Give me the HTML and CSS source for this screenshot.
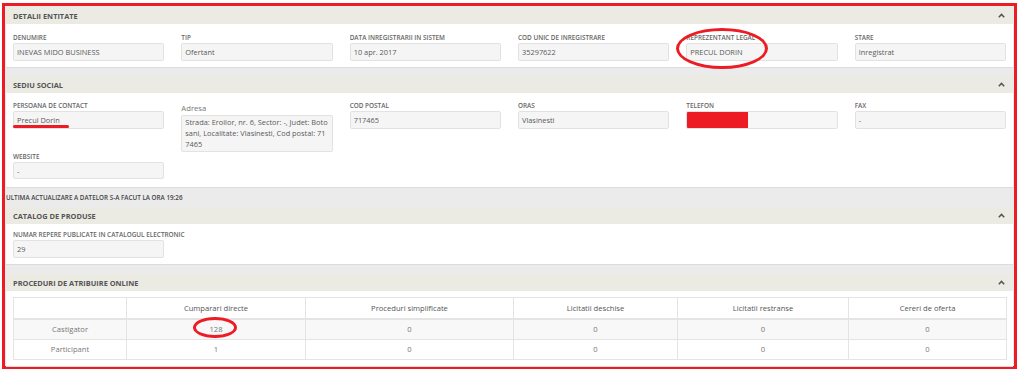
FILE: index.html
```html
<!DOCTYPE html>
<html lang="ro">
<head>
<meta charset="utf-8">
<title>Detalii entitate</title>
<link rel="stylesheet" href="styles.css">
</head>
<body>
<div class="frame">
  <section class="panel">
    <header class="panel-head"><span>Detalii entitate</span><svg class="caret" width="7" height="5" viewBox="0 0 7 5"><path d="M0.8 4.2 L3.5 1.4 L6.2 4.2" fill="none" stroke="#555" stroke-width="1.5"/></svg></header>
    <div class="panel-body grid">
      <div class="field"><label>Denumire</label><div class="input">INEVAS MIDO BUSINESS</div></div>
      <div class="field"><label>Tip</label><div class="input">Ofertant</div></div>
      <div class="field"><label>Data inregistrarii in sistem</label><div class="input">10 apr. 2017</div></div>
      <div class="field"><label>Cod unic de inregistrare</label><div class="input">35297622</div></div>
      <div class="field"><label>Reprezentant legal</label><div class="input">PRECUL DORIN</div></div>
      <div class="field"><label>Stare</label><div class="input">Inregistrat</div></div>
    </div>
  </section>

  <section class="panel gap-top">
    <header class="panel-head"><span>Sediu social</span><svg class="caret" width="7" height="5" viewBox="0 0 7 5"><path d="M0.8 4.2 L3.5 1.4 L6.2 4.2" fill="none" stroke="#555" stroke-width="1.5"/></svg></header>
    <div class="panel-body grid">
      <div class="field"><label>Persoana de contact</label><div class="input">Precul Dorin</div></div>
      <div class="field"><label class="plain">Adresa</label><div class="input area">Strada: Eroilor, nr. 6, Sector: -, Judet: Boto sani, Localitate: Vlasinesti, Cod postal: 71 7465</div></div>
      <div class="field"><label>Cod postal</label><div class="input">717465</div></div>
      <div class="field"><label>Oras</label><div class="input">Vlasinesti</div></div>
      <div class="field"><label>Telefon</label><div class="input redacted"><span class="mask"></span></div></div>
      <div class="field"><label>Fax</label><div class="input">-</div></div>
      <div class="field"><label>Website</label><div class="input">-</div></div>
    </div>
  </section>

  <p class="note">Ultima actualizare a datelor s-a facut la ora 19:26</p>

  <section class="panel">
    <header class="panel-head"><span>Catalog de produse</span><svg class="caret" width="7" height="5" viewBox="0 0 7 5"><path d="M0.8 4.2 L3.5 1.4 L6.2 4.2" fill="none" stroke="#555" stroke-width="1.5"/></svg></header>
    <div class="panel-body grid tight">
      <div class="field wide"><label>Numar repere publicate in catalogul electronic</label><div class="input">29</div></div>
    </div>
  </section>

  <section class="panel gap-top2">
    <header class="panel-head"><span>Proceduri de atribuire online</span><svg class="caret" width="7" height="5" viewBox="0 0 7 5"><path d="M0.8 4.2 L3.5 1.4 L6.2 4.2" fill="none" stroke="#555" stroke-width="1.5"/></svg></header>
    <div class="panel-body table-wrap">
      <table class="stats">
        <colgroup>
          <col class="c1"><col class="c2"><col class="c3"><col class="c4"><col class="c5"><col class="c6">
        </colgroup>
        <thead>
          <tr><th></th><th>Cumparari directe</th><th>Proceduri simplificate</th><th>Licitatii deschise</th><th>Licitatii restranse</th><th>Cereri de oferta</th></tr>
        </thead>
        <tbody>
          <tr class="odd"><td>Castigator</td><td>128</td><td>0</td><td>0</td><td>0</td><td>0</td></tr>
          <tr><td>Participant</td><td>1</td><td>0</td><td>0</td><td>0</td><td>0</td></tr>
        </tbody>
      </table>
    </div>
  </section>
</div>

<div class="mark ellipse-legal"></div>
<div class="mark ellipse-128"></div>
<div class="mark underline-contact"></div>
</body>
</html>
```

FILE: styles.css
```css
* { box-sizing: border-box; }

html, body {
  margin: 0;
  padding: 0;
  background: #ffffff;
  font-family: "Open Sans", "Liberation Sans", sans-serif;
}

body { position: relative; width: 1024px; height: 372px; overflow: hidden; }

.frame {
  margin: 3px 0 0 2px;
  width: 1015px;
  height: 366px;
  border: 3px solid #ed1c24;
  background: #ebebeb;
  padding: 1px 1px 0 1px;
}

.panel {
  background: #ffffff;
  border-bottom: 1px solid #dcdcdc;
}

.gap-top { margin-top: 8px; }
.gap-top2 { margin-top: 9px; }

.panel-head {
  height: 17px;
  background: #ecebe3;
  display: flex;
  align-items: center;
  justify-content: space-between;
  padding: 0 8px 0 7px;
  font-size: 7.4px;
  font-weight: 700;
  text-transform: uppercase;
  color: #555555;
}

.caret { display: block; }

.panel-body { padding: 9px 7px 6px 7px; }

.grid {
  display: grid;
  grid-template-columns: repeat(6, 1fr);
  column-gap: 17px;
  row-gap: 0;
  align-items: start;
}

.grid.tight { padding-top: 6px; padding-bottom: 6px; }

.field label {
  display: block;
  height: 10px;
  line-height: 10px;
  font-size: 6.4px;
  font-weight: 600;
  text-transform: uppercase;
  color: #666666;
  white-space: nowrap;
}

.field label.plain {
  height: 14px;
  line-height: 15px;
  font-size: 7.7px;
  font-weight: 400;
  text-transform: none;
  color: #777777;
}

.field.wide { grid-column: span 2; }
.field.wide .input { width: 151px; }

.input {
  height: 18px;
  line-height: 16px;
  background: #f5f5f5;
  border: 1px solid #e2e2e2;
  border-radius: 2px;
  padding: 0 3px;
  font-size: 7.4px;
  color: #5a5a5a;
  white-space: nowrap;
  overflow: hidden;
}

.input.area {
  height: 37px;
  line-height: 11px;
  padding: 1px 3px;
  white-space: normal;
  word-break: break-all;
}

.input.redacted { padding: 0; background: #f7f7f7; }
.mask {
  display: block;
  width: 61px;
  height: 18px;
  margin: -1px 0 0 0;
  background: #ed1c24;
}

.panel:nth-of-type(2) .panel-body { padding-top: 8px; padding-bottom: 8px; }
.panel:nth-of-type(2) .grid > .field:nth-child(7) .input { height: 17px; }

.note {
  margin: 0;
  height: 19px;
  line-height: 20px;
  font-size: 6.3px;
  font-weight: 600;
  text-transform: uppercase;
  color: #444444;
  white-space: nowrap;
}

.table-wrap { padding: 6px 7px 6px 7px; }

.stats {
  width: 993px;
  border-collapse: collapse;
  table-layout: fixed;
  font-size: 7.6px;
  color: #666666;
}

.stats .c1 { width: 113px; }
.stats .c2 { width: 179px; }
.stats .c3 { width: 208px; }
.stats .c4 { width: 164px; }
.stats .c5 { width: 171px; }
.stats .c6 { width: 158px; }

.stats th, .stats td {
  border: 1px solid #e4e4e4;
  text-align: center;
  height: 21px;
  padding: 0;
}

.stats th { font-weight: 400; color: #555555; border-bottom: 2px solid #e4e4e4; }
.stats td { color: #777777; height: 20.5px; }
.stats tr.odd td { background: #f8f8f8; }

.mark { position: absolute; pointer-events: none; }

.ellipse-legal {
  left: 676px;
  top: 28px;
  width: 92px;
  height: 41px;
  border: 3px solid #ed1c24;
  border-radius: 50%;
}

.ellipse-128 {
  left: 193px;
  top: 317px;
  width: 44px;
  height: 21px;
  border: 3px solid #ed1c24;
  border-radius: 50%;
}

.underline-contact {
  left: 13px;
  top: 125px;
  width: 56px;
  height: 3px;
  background: #ed1c24;
  border-radius: 2px;
}
```
